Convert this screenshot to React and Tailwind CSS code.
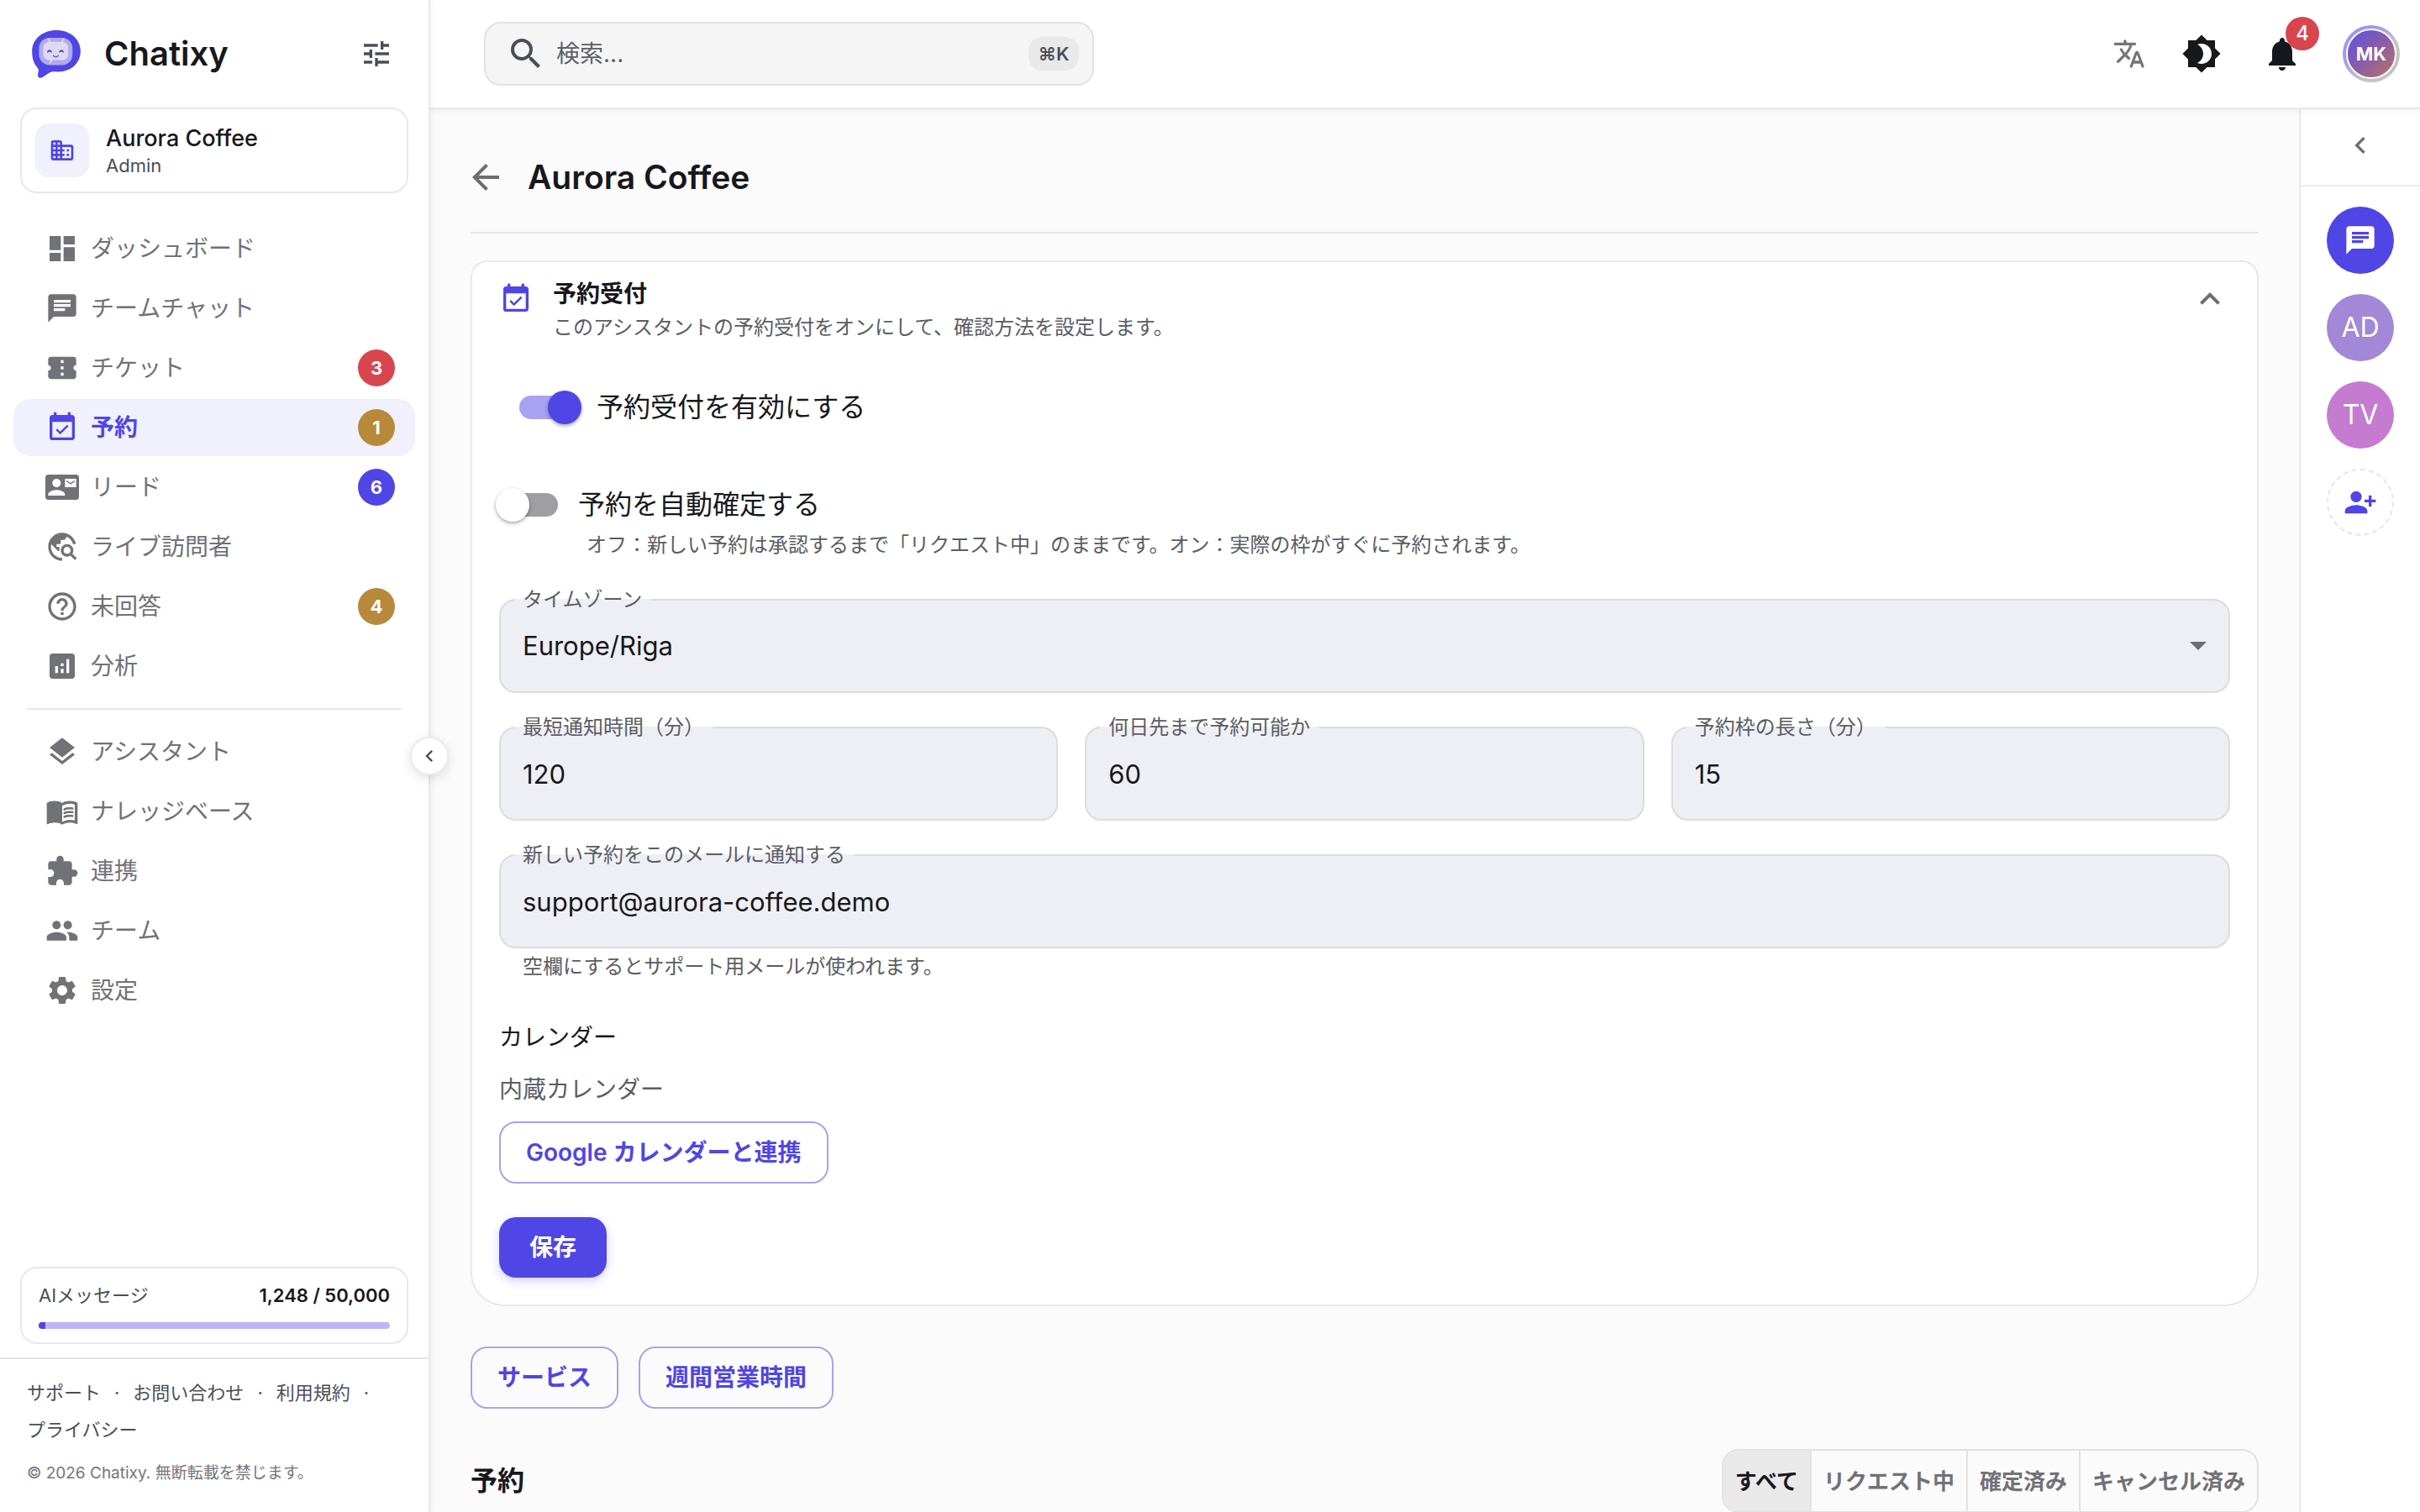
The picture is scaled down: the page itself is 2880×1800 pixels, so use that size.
import React, { useState } from "react";
import clsx from "clsx";
import {
  MdArrowBack,
  MdArrowDropDown,
  MdBrightness4,
  MdChevronLeft,
  MdChat,
  MdConfirmationNumber,
  MdContactMail,
  MdDashboard,
  MdEventAvailable,
  MdExpandLess,
  MdExtension,
  MdGroup,
  MdHelpOutline,
  MdLayers,
  MdAnalytics,
  MdMenuBook,
  MdNotifications,
  MdPersonAddAlt1,
  MdSearch,
  MdSettings,
  MdTravelExplore,
  MdTune,
} from "react-icons/md";

const mainNav = [
  { label: "ダッシュボード", icon: MdDashboard },
  { label: "チームチャット", icon: MdChat },
  { label: "チケット", icon: MdConfirmationNumber, badge: 3, badgeColor: "bg-[#d8454f]" },
  { label: "予約", icon: MdEventAvailable, badge: 1, badgeColor: "bg-[#b8893b]", active: true },
  { label: "リード", icon: MdContactMail, badge: 6, badgeColor: "bg-[#4f46e5]" },
  { label: "ライブ訪問者", icon: MdTravelExplore },
  { label: "未回答", icon: MdHelpOutline, badge: 4, badgeColor: "bg-[#b8893b]" },
  { label: "分析", icon: MdAnalytics },
];

const manageNav = [
  { label: "アシスタント", icon: MdLayers },
  { label: "ナレッジベース", icon: MdMenuBook },
  { label: "連携", icon: MdExtension },
  { label: "チーム", icon: MdGroup },
  { label: "設定", icon: MdSettings },
];

const footerLinks = ["サポート", "お問い合わせ", "利用規約", "プライバシー"];
const filters = ["すべて", "リクエスト中", "確定済み", "キャンセル済み"];

const usage = { used: 1248, limit: 50000 };

const Logo = () => (
  <svg viewBox="0 0 175 173" className="w-[58px] h-[57px]" aria-hidden="true">
    <path
      fill="#4f46e5"
      d="M88 0c50 0 87 32 87 76s-36 74-80 74c-12 0-20-1-27 1-13 4-26 21-39 21-9 0-9-9-7-17 2-7 2-14-2-19C6 121 0 102 0 76 0 32 38 0 88 0Z"
    />
    <rect x="25" y="27" width="121" height="99" rx="38" fill="#b1a9f1" />
    <path d="M58 30l8 16M114 30l-8 16" stroke="#dddaee" strokeWidth="4" strokeLinecap="round" />
    <path
      fill="#dddaee"
      d="M66 42h40c16 0 25 8 25 24v19c0 16-9 23-25 23H74c-4 5-5 11-12 14 3-6 3-10 2-14-15-1-24-8-24-23V66c0-16 10-24 26-24Z"
    />
    <path d="M54 82c0-15 18-15 18 0-6-5-12-5-18 0ZM97 82c0-15 18-15 18 0-6-5-12-5-18 0Z" fill="#4f46e5" />
    <path d="M77 92c5 6 12 6 17 0" fill="none" stroke="#4f46e5" strokeWidth="4" strokeLinecap="round" />
  </svg>
);

const BusinessIcon = () => (
  <svg viewBox="0 0 24 24" fill="currentColor" className="size-8" aria-hidden="true">
    <path d="M12 7V5c0-1.1-.9-2-2-2H4c-1.1 0-2 .9-2 2v14c0 1.1.9 2 2 2h16c1.1 0 2-.9 2-2V9c0-1.1-.9-2-2-2h-8zM6 19H4v-2h2v2zm0-4H4v-2h2v2zm0-4H4V9h2v2zm0-4H4V5h2v2zm4 12H8v-2h2v2zm0-4H8v-2h2v2zm0-4H8V9h2v2zm0-4H8V5h2v2zm9 12h-7v-2h2v-2h-2v-2h2v-2h-2V9h7c.55 0 1 .45 1 1v8c0 .55-.45 1-1 1zm-1-8h-2v2h2v-2zm0 4h-2v2h2v-2z" />
  </svg>
);

const TranslateIcon = () => (
  <svg viewBox="0 0 24 24" fill="currentColor" className="size-10" aria-hidden="true">
    <path d="M12.65 15.67c.14-.36.05-.77-.23-1.05l-2.09-2.06.03-.03c1.74-1.94 2.98-4.17 3.71-6.53h1.94c.54 0 .99-.45.99-.99v-.02c0-.54-.45-.99-.99-.99H10V3c0-.55-.45-1-1-1s-1 .45-1 1v1H1.99c-.54 0-.99.45-.99.99 0 .55.45.99.99.99h10.18C11.5 7.92 10.44 9.75 9 11.35c-.81-.89-1.49-1.86-2.06-2.88-.16-.29-.45-.47-.78-.47-.69 0-1.13.75-.79 1.35.63 1.13 1.4 2.21 2.3 3.21L3.3 16.87c-.4.39-.4 1.03 0 1.42.39.39 1.02.39 1.42 0L9 14l2.02 2.02c.51.51 1.38.32 1.63-.35zM17.5 10c-.6 0-1.14.37-1.35.94l-3.67 9.8c-.24.61.22 1.26.87 1.26.39 0 .74-.24.88-.61l.89-2.39h4.75l.9 2.39c.14.36.49.61.88.61.65 0 1.11-.65.88-1.26l-3.67-9.8c-.22-.57-.76-.94-1.36-.94zm-1.62 7l1.62-4.33L19.12 17h-3.24z" />
  </svg>
);

const NavItem = ({ item }) => {
  const Icon = item.icon;
  return (
    <li>
      <a
        href="#"
        className={clsx(
          "flex items-center h-[68px] pl-[38px] pr-6 gap-3.5 rounded-[20px] text-[28px]",
          item.active ? "bg-[#f1f0fd] text-[#4f46e5] font-semibold" : "text-[#717178]"
        )}
      >
        <Icon className="size-10 shrink-0" />
        <span className="flex-1 leading-10">{item.label}</span>
        {item.badge && (
          <span
            className={clsx(
              "size-11 rounded-full flex items-center justify-center text-white text-[22px] font-bold",
              item.badgeColor
            )}
          >
            {item.badge}
          </span>
        )}
      </a>
    </li>
  );
};

const Sidebar = () => (
  <aside className="relative z-20 w-[512px] shrink-0 flex flex-col bg-white border-r-2 border-[#e8e8e8] shadow-[2px_0_8px_rgba(0,0,0,0.05)]">
    <div className="flex items-center h-32 pl-[38px] pr-[42px]">
      <Logo />
      <span className="ml-7 flex-1 text-[40px] font-semibold text-[#17181d]">Chatixy</span>
      <button aria-label="表示設定" className="text-[#4b4e59]">
        <MdTune className="size-10" />
      </button>
    </div>

    <button className="mx-6 flex items-center gap-5 h-[102px] px-4 text-left border-2 border-[#e8e8e8] rounded-[20px]">
      <span className="size-16 rounded-2xl bg-[#f1f0fd] text-[#4f46e5] flex items-center justify-center">
        <BusinessIcon />
      </span>
      <span className="flex flex-col">
        <span className="text-[27px] leading-9 font-medium text-[#17181d]">Aurora Coffee</span>
        <span className="text-[22px] leading-7 text-[#4b4e59]">Admin</span>
      </span>
    </button>

    <nav className="mt-8 px-4">
      <ul className="flex flex-col gap-[3px]">
        {mainNav.map((item) => (
          <NavItem key={item.label} item={item} />
        ))}
      </ul>
      <hr className="my-4 mx-4 border-t-2 border-[#e8e8e8]" />
      <ul className="flex flex-col gap-[3px]">
        {manageNav.map((item) => (
          <NavItem key={item.label} item={item} />
        ))}
      </ul>
    </nav>

    <div className="mt-auto mx-6 mb-4 px-5 py-4 border-2 border-[#e8e8e8] rounded-[20px]">
      <div className="flex justify-between text-[22px] leading-8">
        <span className="text-[#4b4e59]">AIメッセージ</span>
        <span className="font-semibold text-[#17181d]">1,248 / 50,000</span>
      </div>
      <div className="mt-4 h-2 rounded-full bg-[#bcb7f4] overflow-hidden">
        <div className="h-full bg-[#4f46e5]" style={{ width: `${Math.floor((usage.used / usage.limit) * 100)}%` }} />
      </div>
    </div>

    <footer className="border-t-2 border-[#e8e8e8] px-8 pt-[18px] pb-8">
      <ul className="flex flex-wrap text-[22px] leading-[44px] text-[#4b4e59]">
        {footerLinks.map((link, i) => (
          <li key={link}>
            <a href="#">{link}</a>
            {i < footerLinks.length - 1 && <span className="mx-4">·</span>}
          </li>
        ))}
      </ul>
      <p className="mt-4 text-[19px] leading-7 text-[#74747c]">© 2026 Chatixy. 無断転載を禁じます。</p>
    </footer>

    <button
      aria-label="サイドバーを閉じる"
      className="absolute top-1/2 -right-6 -translate-y-1/2 size-[46px] rounded-full bg-white border-2 border-[#ececec] shadow-[0_4px_14px_rgba(0,0,0,0.12)] flex items-center justify-center text-[#4b4e59]"
    >
      <MdChevronLeft className="size-7" />
    </button>
  </aside>
);

const TopBar = () => (
  <header className="relative z-10 flex items-center h-[130px] pl-16 pr-6 bg-white border-b-2 border-[#e8e8e8] shadow-[0_2px_8px_rgba(0,0,0,0.06)]">
    <div className="flex items-center w-[726px] h-[76px] pl-6 pr-4 gap-3 rounded-[20px] bg-[#f5f5f5] border-2 border-[#e2e2e2]">
      <MdSearch className="size-12 text-[#4b4e59]" />
      <input
        type="text"
        aria-label="検索"
        placeholder="検索..."
        className="flex-1 min-w-0 text-[28px] bg-transparent outline-none placeholder:text-[#5c5f69]"
      />
      <kbd className="flex items-center justify-center w-[60px] h-10 rounded-2xl bg-[#e9e9e9] text-[22px] font-semibold font-[Inter,sans-serif] text-[#4b4e59]">
        ⌘K
      </kbd>
    </div>

    <div className="ml-auto flex items-center">
      <button aria-label="言語" className="text-[#74747a]">
        <TranslateIcon />
      </button>
      <button aria-label="テーマ" className="ml-[42px] text-[#17181d]">
        <MdBrightness4 className="size-12" />
      </button>
      <button aria-label="通知" className="relative ml-12 text-[#17181d]">
        <MdNotifications className="size-12" />
        <span className="absolute -top-5 left-7 size-10 rounded-full bg-[#d8454f] text-white text-[24px] font-medium flex items-center justify-center">
          4
        </span>
      </button>
      <button
        aria-label="アカウント"
        className="ml-12 size-[68px] p-1 rounded-full bg-linear-to-br from-[#9d97f5] from-30% to-[#c4c3c0] to-60%"
      >
        <span className="flex items-center justify-center size-full rounded-full border-2 border-white bg-linear-to-br from-[#5a4fe0] via-[#8b5ba8] to-[#bb7058] text-white text-[22px] font-bold">
          MK
        </span>
      </button>
    </div>
  </header>
);

const TeamRail = () => (
  <aside className="w-36 shrink-0 bg-white border-l-2 border-[#e8e8e8]">
    <div className="h-[92px] pb-1 flex items-center justify-center border-b-2 border-[#ececec]">
      <button aria-label="パネルを開く" className="text-[#6c6d73]">
        <MdChevronLeft className="size-10" />
      </button>
    </div>
    <div className="flex flex-col items-center gap-6 pt-6 text-[32px] text-white">
      <button aria-label="チャット" className="size-20 rounded-full bg-[#4f46e5] flex items-center justify-center">
        <MdChat className="size-10" />
      </button>
      <button className="size-20 rounded-full bg-[#a288d6]">AD</button>
      <button className="size-20 rounded-full bg-[#c47bd0]">TV</button>
      <button
        aria-label="メンバーを追加"
        className="size-20 rounded-full border-2 border-dashed border-[#e6e6e6] text-[#4f46e5] flex items-center justify-center"
      >
        <MdPersonAddAlt1 className="size-10" />
      </button>
    </div>
  </aside>
);

const Toggle = ({ label, checked, onChange, className }) => (
  <label className={clsx("flex items-center gap-6 h-[58px] text-[32px] text-[#17181d]", className)}>
    <input
      type="checkbox"
      checked={checked}
      onChange={(e) => onChange(e.target.checked)}
      className="appearance-none relative w-[68px] h-7 rounded-full bg-[#9f9fa3] checked:bg-[#a7a2f2] before:absolute before:-top-1.5 before:-left-1.5 before:size-10 before:rounded-full before:bg-white before:shadow-[0_2px_4px_rgba(0,0,0,0.35)] checked:before:left-[34px] checked:before:bg-[#4f46e5]"
    />
    <span className="leading-10">{label}</span>
  </label>
);

const Field = ({ id, label, children }) => (
  <fieldset className="relative min-w-0 px-4 pb-[11px] border-2 border-[#dcdce2] rounded-[20px] bg-[#eeeff4]">
    <legend className="px-2.5 text-[24px] leading-6 text-[#5a5d66]">
      <label htmlFor={id}>{label}</label>
    </legend>
    {children}
  </fieldset>
);

const inputClass = "block w-full h-[86px] px-2.5 text-[31px] text-[#17181d] bg-transparent outline-none appearance-none";

const OutlineButton = ({ children }) => (
  <button className="h-[74px] px-[30px] border-2 border-[#a7a2f2] rounded-[20px] text-[28px] font-semibold text-[#4f46e5]">
    {children}
  </button>
);

const BookingSettings = () => {
  const [enabled, setEnabled] = useState(true);
  const [autoConfirm, setAutoConfirm] = useState(false);

  return (
    <section className="bg-white border-2 border-[#e8e8e8] rounded-t-[20px] rounded-b-[40px] px-8 pt-[18px] pb-8">
      <div className="flex items-start gap-6">
        <MdEventAvailable className="mt-1.5 size-10 text-[#4f46e5]" />
        <div className="flex-1">
          <h2 className="text-[28px] leading-10 font-bold text-[#17181d]">予約受付</h2>
          <p className="text-[24px] leading-10 text-[#5a5d66]">
            このアシスタントの予約受付をオンにして、確認方法を設定します。
          </p>
        </div>
        <button aria-label="折りたたむ" className="mt-0.5 text-[#6c6d73]">
          <MdExpandLess className="size-12" />
        </button>
      </div>

      <Toggle label="予約受付を有効にする" checked={enabled} onChange={setEnabled} className="mt-[46px] pl-6" />
      <Toggle label="予約を自動確定する" checked={autoConfirm} onChange={setAutoConfirm} className="mt-[58px] pl-0.5" />
      <p className="ml-[104px] text-[24px] leading-[38px] text-[#5a5d66]">
        オフ：新しい予約は承認するまで「リクエスト中」のままです。オン：実際の枠がすぐに予約されます。
      </p>

      <div className="mt-[34px] flex flex-col gap-[29px]">
        <Field id="timezone" label="タイムゾーン">
          <select id="timezone" className={inputClass}>
            <option>Europe/Riga</option>
          </select>
          <MdArrowDropDown className="absolute right-3 top-[18px] size-12 text-[#6c6d73] pointer-events-none" />
        </Field>
        <div className="grid grid-cols-3 gap-8">
          <Field id="notice" label="最短通知時間（分）">
            <input id="notice" type="number" defaultValue="120" className={inputClass} />
          </Field>
          <Field id="horizon" label="何日先まで予約可能か">
            <input id="horizon" type="number" defaultValue="60" className={inputClass} />
          </Field>
          <Field id="slot" label="予約枠の長さ（分）">
            <input id="slot" type="number" defaultValue="15" className={inputClass} />
          </Field>
        </div>
        <Field id="notify" label="新しい予約をこのメールに通知する">
          <input id="notify" type="email" defaultValue="support@aurora-coffee.demo" className={inputClass} />
        </Field>
      </div>
      <p className="mt-1 ml-7 text-[24px] leading-9 text-[#5a5d66]">空欄にするとサポート用メールが使われます。</p>

      <h3 className="mt-[46px] text-[28px] leading-10 text-[#17181d]">カレンダー</h3>
      <p className="mt-[22px] mb-[18px] text-[28px] leading-10 text-[#5a5d66]">内蔵カレンダー</p>
      <OutlineButton>Google カレンダーと連携</OutlineButton>
      <div className="mt-10">
        <button className="h-[72px] px-9 rounded-[20px] bg-[#4f46e5] text-white text-[28px] font-semibold shadow-[0_4px_12px_rgba(79,70,229,0.25)]">
          保存
        </button>
      </div>
    </section>
  );
};

const App = () => {
  const [filter, setFilter] = useState("すべて");

  return (
    <div lang="ja" className="flex h-screen overflow-hidden bg-[#fbfbfb] font-[Inter,'Noto_Sans_CJK_JP',sans-serif]">
      <Sidebar />
      <div className="flex-1 min-w-0 flex flex-col">
        <TopBar />
        <div className="flex-1 min-h-0 flex">
          <main className="flex-1 min-w-0 px-12 pt-12 overflow-hidden">
            <div className="flex items-center gap-[26px] h-[100px] pb-8 mb-8 border-b-2 border-[#e6e6e6]">
              <button aria-label="戻る" className="-ml-1.5 text-[#6c6d73]">
                <MdArrowBack className="size-12" />
              </button>
              <h1 className="text-[39px] font-semibold text-[#17181d]">Aurora Coffee</h1>
            </div>

            <BookingSettings />

            <div className="mt-12 flex gap-6">
              <OutlineButton>サービス</OutlineButton>
              <OutlineButton>週間営業時間</OutlineButton>
            </div>

            <div className="mt-12 flex items-center justify-between">
              <h2 className="text-[32px] font-bold text-[#17181d]">予約</h2>
              <div className="flex h-[76px] border-2 border-[#e2e2e4] rounded-[20px] overflow-hidden divide-x-2 divide-[#e2e2e4] text-[26px] font-semibold">
                {filters.map((name) => (
                  <button
                    key={name}
                    onClick={() => setFilter(name)}
                    className={clsx("px-3.5", name === filter ? "bg-[#e9e9e9] text-[#17181d]" : "text-[#717178]")}
                  >
                    {name}
                  </button>
                ))}
              </div>
            </div>
          </main>
          <TeamRail />
        </div>
      </div>
    </div>
  );
};

export default App;
